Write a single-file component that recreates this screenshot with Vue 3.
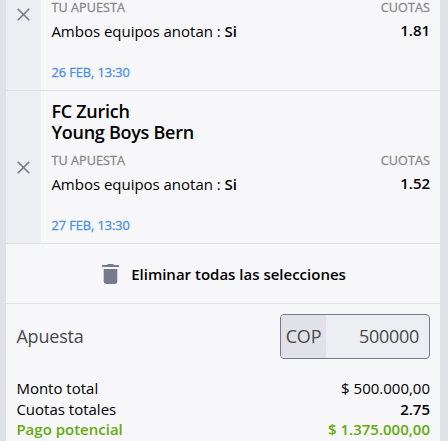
<script setup>
const selections = [
  { id: 1, teams: [], market: 'Ambos equipos anotan', pick: 'Si', odds: '1.81', date: '26 FEB, 13:30' },
  { id: 2, teams: ['FC Zurich', 'Young Boys Bern'], market: 'Ambos equipos anotan', pick: 'Si', odds: '1.52', date: '27 FEB, 13:30' },
]
</script>

<template>
  <main class="page">
    <section class="slip">
      <div class="selections">
        <article v-for="s in selections" :key="s.id" class="selection">
          <button class="remove" type="button">
            <svg width="13" height="13" viewBox="0 0 13 13"><path d="M.7 .7 12.300 12.300M12.300 .7 .7 12.300" /></svg>
          </button>
          <div class="details">
            <h2 v-if="s.teams.length" class="teams">
              <span v-for="t in s.teams" :key="t">{{ t }}</span>
            </h2>
            <div class="line labels"><span>TU APUESTA</span><span>CUOTAS</span></div>
            <div class="line bet">
              <span>{{ s.market }} : <b>{{ s.pick }}</b></span>
              <b class="odds">{{ s.odds }}</b>
            </div>
            <div class="date">{{ s.date }}</div>
          </div>
        </article>
      </div>

      <button class="clear" type="button">
        <svg width="17" height="20" viewBox="0 0 17 20">
          <path d="M0 3V1.5Q0 1 .6 1H5L6 0h5l1 1h4.400q.6 0 .6.500V3ZM1.700 5h13.600v12.600q0 2.400-2.400 2.400H4.100q-2.400 0-2.400-2.400Z" />
        </svg>
        <span>Eliminar todas las selecciones</span>
      </button>

      <div class="stake">
        <span class="stake-label">Apuesta</span>
        <div class="field">
          <span class="currency">COP</span>
          <span class="amount">500000</span>
        </div>
      </div>

      <div class="totals">
        <div class="line"><span>Monto total</span><span class="money">$ 500.000,00</span></div>
        <div class="line"><span>Cuotas totales</span><b>2.75</b></div>
        <div class="line payout"><span>Pago potencial</span><span class="win">$ 1.375.000,00</span></div>
      </div>
    </section>
  </main>
</template>

<style>
body {
  background: #e1e2e8;
}
</style>

<style scoped>
.page {
  box-sizing: border-box;
  height: 441px;
  padding: 0 8px 0 6px;
  overflow: hidden;
  background: #e1e2e8;
  color: #000;
  font-family: "Open Sans", "Noto Sans", sans-serif;
  font-size: 15px;
}
.slip {
  height: 441px;
  background: #f7f7fa;
}
button {
  margin: 0;
  padding: 0;
  border: 0;
  background: none;
  font: inherit;
  color: inherit;
}
b {
  font-weight: 600;
}
.selections {
  display: flex;
  flex-direction: column;
  justify-content: flex-end;
  height: 244px;
  overflow: hidden;
}
.selection {
  box-sizing: border-box;
  display: flex;
  flex: none;
  height: 153px;
  border-bottom: 1px solid #e1e2e6;
}
.remove {
  display: flex;
  align-items: center;
  justify-content: center;
  box-sizing: border-box;
  width: 35px;
  padding: 1px 0 0;
  background: #edeef2;
}
.remove path {
  fill: none;
  stroke: #777a8a;
  stroke-width: 1.6;
}
.details {
  display: flex;
  flex: 1;
  flex-direction: column;
  justify-content: flex-end;
  padding: 0 10px 8px 10.4px;
}
.teams {
  display: flex;
  flex-direction: column;
  margin: 0 0 8px;
  font-size: 18px;
  font-weight: 600;
  line-height: 21px;
  letter-spacing: -0.27px;
}
.line {
  display: flex;
  justify-content: space-between;
}
.labels {
  height: 20px;
  color: #88888a;
  font-size: 12.6px;
  font-weight: 500;
  line-height: 20px;
  letter-spacing: 0.08px;
  -webkit-text-stroke: 0.3px currentColor;
}
.bet {
  height: 28px;
  line-height: 26px;
  letter-spacing: -0.02px;
}
.odds {
  line-height: 24px;
}
.date {
  margin-top: 16px;
  color: #4a90e2;
  font-size: 12.8px;
  font-weight: 500;
  line-height: 20px;
  letter-spacing: -0.06px;
  -webkit-text-stroke: 0.3px currentColor;
}
.clear {
  box-sizing: border-box;
  display: flex;
  align-items: center;
  justify-content: center;
  gap: 12px;
  width: 100%;
  height: 60px;
  padding-left: 2px;
  border-bottom: 1px solid #e1e2e6;
  font-weight: 600;
}
.clear svg {
  fill: #777a8a;
}
.stake {
  display: flex;
  align-items: center;
  justify-content: space-between;
  height: 65px;
  padding: 0 10px 0 10.4px;
  color: #4a4a4a;
  font-size: 18px;
}
.stake-label {
  padding-bottom: 2px;
  letter-spacing: -0.2px;
}
.field {
  box-sizing: border-box;
  display: flex;
  width: 150px;
  height: 45px;
  overflow: hidden;
  border: 1px solid #777a8a;
  border-radius: 4px;
  background: #edeef2;
  line-height: 43px;
}
.currency {
  width: 45px;
  background: #e1e2e8;
  text-align: center;
  letter-spacing: -0.2px;
}
.amount {
  flex: 1;
  padding-right: 10px;
  text-align: right;
  letter-spacing: -0.3px;
}
.totals {
  padding: 9px 10px 0 10.4px;
  line-height: 20.700px;
}
.payout {
  color: #64ab0c;
  font-weight: 600;
}
</style>
